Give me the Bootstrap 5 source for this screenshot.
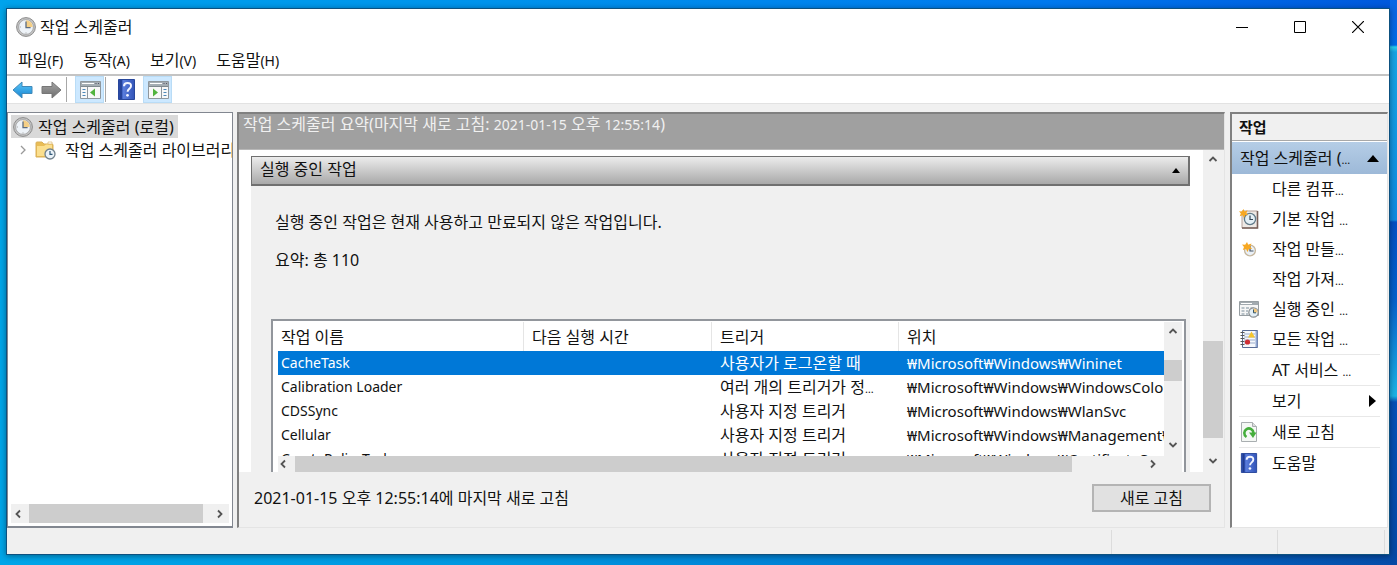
<!DOCTYPE html>
<html lang="ko">
<head>
<meta charset="utf-8">
<meta name="viewport" content="width=device-width, initial-scale=1">
<title>작업 스케줄러</title>
<link href="https://cdn.jsdelivr.net/npm/bootstrap@5.3.0/dist/css/bootstrap.min.css" rel="stylesheet">
<style>
:root{--face:#f0f0f0;--thumb:#cdcdcd;--edge:#828790}
body{font-family:"Noto Sans","Noto Sans CJK KR",sans-serif;font-size:16px;line-height:24px;color:#111;
 background:linear-gradient(180deg,#0a66e4 0 20px,#006be6 45px,#2ad0ee 47px,#18a4e4 52px,#0e8ae0 220px,#0450c4 222px,#0560cc 300px,#1cb4e6 396px,#0650b8 402px,#0648a4) right/7px 100% no-repeat,
 linear-gradient(90deg,#00a3ec,#0093ec 35%,#0079ee 75%,#0058dc) top/100% 10px no-repeat,
 linear-gradient(90deg,#00a5e8,#0097e0 35%,#0070cc 75%,#064ca8)}
button{font:inherit;color:inherit}
a{color:inherit;text-decoration:none}
svg{display:block;flex:none}
.desk{height:100vh;min-height:400px;padding:8px 7px 10px 6px}
.win{border:1px solid #0d5180;background:var(--face);box-shadow:0 1px 6px #0006}
.titlebar{height:36px;padding:0 2px 0 9px}
.titlebar button{width:58px;height:36px;border:0;background:none}
.titlebar button svg{margin:auto}
.menus{height:31px;gap:20px;padding:4px 12px 0 11px;border-bottom:2px solid #c4c4c4;line-height:22px}
.menus small{font-size:14px}
.tools{height:28px;padding-left:5px;border-bottom:1px solid #e2e2e2}
.tools button{border:0;background:none;padding:0;height:27px}
.tools .held{background:#cce8ff;border:1px solid #b9dcf6;width:29px;padding-left:4px}
.rule{width:1px;height:25px;background:#a8a8a8}
.rule.near{margin:0 4px 0 1px}
.panes{padding:8px 1px 0 0}
.tree{width:226px;border:1px solid var(--edge);border-bottom-width:2px;background:#fff}
.node{height:23px;line-height:22px;white-space:nowrap}
.node.on{background:#d9d9d9;margin:2px 0 0 3px;padding:0 4px 0 2px;gap:5px}
.node.kid{padding-left:12px;gap:9px}
.treebar{height:19px;background:var(--face);margin:auto 3px 3px}
.mid{margin:0 5px 0 4px;border:solid #808080;border-width:2px 0 0 2px;border-right:1px solid #e4e4e4;border-bottom:1px solid #e4e4e4}
.banner{height:36px;background:#a0a0a0;color:#f0f0f0;padding-left:4px;line-height:20px;border-bottom:1px solid #b8b8b8;white-space:nowrap;overflow:hidden}
.banner time{font-size:14px}
.sheet{background:#fff;padding:6px 13px 0 12px;overflow:hidden}
.ghead{height:30px;border:2px solid #707070;border-width:1px 2px 2px 1px;background:linear-gradient(#ececec,#a9a9a9);padding:0 8px;line-height:24px}
.gbody{background:var(--face);padding:24px 4px 0 20px;overflow:hidden}
.gbody p{margin:0 0 14px 4px}
.list{border:2px solid #92969c;border-bottom:0;background:#fff;margin-top:33px;padding:1px 2px 0 5px;overflow:hidden}
.rows{overflow:hidden}
.rows table{width:100%;table-layout:fixed;border-collapse:separate;border-spacing:0}
.rows th,.rows td{padding:0 0 0 3px;font-weight:400;white-space:nowrap;overflow:hidden;height:24px;line-height:22px;vertical-align:middle}
.rows th{height:29px;border-left:1px solid #e5e5e5;padding-left:8px}
.rows th:first-child{border:0;padding-left:3px}
.rows td+td{padding-left:9px}
.rows td:first-child{font-size:14px}
.rows td:last-child{font-size:15px}
.rows .sel td{background:#0078d7;color:#fff}
.vbar{width:18px;background:var(--face);padding:4px 0 6px}
.vbar.wide{width:20px;margin-right:1px}
.vbar .thumb{flex:none}
.hbar{height:16px;background:var(--face)}
.thumb{background:var(--thumb)}
.gap20{margin-top:18px}
.foot{height:55px;padding:0 13px 3px 15px}
.foot button{width:119px;height:28px;border:2px solid #b4b4b4;background:#e1e1e1;padding:0;line-height:22px}
.acts{width:158px;background:#fff;border:solid #808080;border-width:2px 0 0 2px;border-right:1px solid #e4e4e4;border-bottom:1px solid #e4e4e4}
.acts h2{font-size:15px;line-height:26px;font-weight:700;margin:0;padding-left:7px;background:var(--face);border-bottom:1px solid #a8a8a8}
.acts .scope{height:32px;margin-top:1px;padding:0 8px;background:linear-gradient(#b5cde6,#9db9d8);border:0;width:100%}
.acts li{margin:0 7px}
.acts li a{height:30px}
.acts li.cut{border-top:1px solid #e8e8e8}
.acts .ico{width:20px;margin-right:13px}
.dots{font-size:11px;line-height:1}
.status{height:26px}
.status span{border-right:1px solid #dcdcdc;margin-top:2px}
</style>
</head>
<body>
<svg width="0" height="0" class="position-absolute" aria-hidden="true">
 <defs>
 <linearGradient id="gb" x2="0" y2="1"><stop stop-color="#5cc8fa"/><stop offset="1" stop-color="#1583d0"/></linearGradient>
 <linearGradient id="gg" x2="0" y2="1"><stop stop-color="#a4a4a4"/><stop offset="1" stop-color="#6e6e6e"/></linearGradient>
 <linearGradient id="gh" x2="1" y2="0"><stop stop-color="#2746a0"/><stop offset=".2" stop-color="#2f52b4"/><stop offset=".3" stop-color="#5a7ddc"/><stop offset="1" stop-color="#3254b8"/></linearGradient>
 <symbol id="clock" viewBox="0 0 20 20"><circle cx="10" cy="10" r="9.4" fill="#c4c4c4" stroke="#8c8c8c"/><circle cx="10" cy="10" r="7.4" fill="#eef3f8" stroke="#9c9c9c" stroke-width=".8"/><path d="M10 10V3.2A6.8 6.8 0 0 1 16.8 10z" fill="#f4cf86"/><path d="M10 4.5V10.6H14.6" fill="none" stroke="#5c6c80" stroke-width="1.3"/><path d="M10 15.5v1M3.8 10h1" stroke="#999"/></symbol>
 <symbol id="folder" viewBox="0 0 21 20"><path d="M1 3q0-1 1-1h5l2 2h8q1 0 1 1v12H1z" fill="#e9bd55" stroke="#d9b05a"/><path d="M2 6h7l2-1.500h6V16H2z" fill="#fbdf8e"/><path d="M13 2h4v2h-4z" fill="#fff" stroke="#d9b05a" stroke-width=".6"/><circle cx="15" cy="14" r="5" fill="#eaf2f8" stroke="#71818d" stroke-width="1.300"/><path d="M15 11v3.300h2.500" fill="none" stroke="#2f5878" stroke-width="1.200"/></symbol>
 <symbol id="help" viewBox="0 0 17 21"><path d="M.5.5h16v20H.5z" fill="url(#gh)" stroke="#28479c"/><path d="M3 1v19" stroke="#1d3684"/><path d="M6 7.200Q6 4 9.600 4t3.400 3.100c0 2.600-3.400 2.900-3.400 5.700" fill="none" stroke="#f2f5ff" stroke-width="2"/><circle cx="9.500" cy="16.300" r="1.400" fill="#f2f5ff"/></symbol>
 <symbol id="pane" viewBox="0 0 21 18"><path d="M.5.5h20v17H.5z" fill="#f8f8f8" stroke="#8f979d"/><path d="M1 1h19v4H1z" fill="#a4adb3"/><path d="M2 2.500h12" stroke="#fff"/><path d="M15.500 2.500h1m1.500 0h1" stroke="#556"/><path d="M1 5.500h19" stroke="#808a90"/><path d="M7.500 6v11" stroke="#8f979d"/><path d="M2.500 8.500h3m-3 3h3m-3 3h3" stroke="#4e88b8"/><path d="M15 7.500v8L10 11.500z" fill="#51b33e"/></symbol>
 <symbol id="pane2" viewBox="0 0 21 18"><path d="M.5.5h20v17H.5z" fill="#f8f8f8" stroke="#8f979d"/><path d="M1 1h19v4H1z" fill="#a4adb3"/><path d="M2 2.500h12" stroke="#fff"/><path d="M15.500 2.500h1m1.500 0h1" stroke="#556"/><path d="M1 5.500h19" stroke="#808a90"/><path d="M13.500 6v11" stroke="#8f979d"/><path d="M15.500 8.500h3m-3 3h3m-3 3h3" stroke="#4e88b8"/><path d="M5 7.500v8l5-4z" fill="#51b33e"/></symbol>
 <symbol id="arr" viewBox="0 0 21 18"><path d="M1 9 10 1v4.500h10v7H10V17z"/></symbol>
 <symbol id="star" viewBox="0 0 10 10"><path d="m5 0 1.200 2.700L9.500 1.500 8.200 4.500 10 7l-3-.2L5.500 10 4 7 .8 8 2 5 0 2.500l3.200.2z" fill="#f7a823"/></symbol>
 <symbol id="basic" viewBox="0 0 20 20"><path d="M3 2h15.500v17H3z" fill="#eee9e5" stroke="#b4a19a"/><path d="M18.500 2v17H3" fill="none" stroke="#775f58" stroke-width="1.600"/><circle cx="11" cy="10" r="5.600" fill="#e4eff5" stroke="#607a88" stroke-width="1.300"/><path d="M11 6.500v4h3" fill="none" stroke="#345" stroke-width="1.200"/><use href="#star" width="9" height="9"/></symbol>
 <symbol id="make" viewBox="0 0 20 20"><circle cx="11" cy="11.500" r="5.400" fill="#eaf0f6" stroke="#c4b59c" stroke-width="1.300"/><path d="M11 7v5h3.500" fill="none" stroke="#456" stroke-width="1.200"/><use href="#star" x="3" y="3" width="10" height="10"/></symbol>
 <symbol id="run" viewBox="0 0 20 20"><path d="M.5 2.500h19v14H.5z" fill="#f6f6f6" stroke="#979ea2"/><path d="M1 3h18v3H1z" fill="#a2aaaf"/><path d="M2 4.500h11" stroke="#fff"/><path d="M2.500 9h3m1.500 0h3m1.500 0h3M2.500 12h3m1.500 0h2M2.500 15h3m1.500 0h2" stroke="#7b8e9b"/><circle cx="14.500" cy="13.500" r="4.700" fill="#e2eef6" stroke="#8a8f92" stroke-width="1.200"/><path d="M14.500 13.500V9.500a4 4 0 0 1 4 4z" fill="#f1c67c"/><path d="M14.500 10.500v3.300H17" fill="none" stroke="#356"/></symbol>
 <symbol id="book" viewBox="0 0 20 20"><path d="M3.500 1.500h15v17h-15z" fill="#f6f8fc" stroke="#5a6d96"/><path d="M17.500 2v16" stroke="#8fa5d0" stroke-width="2"/><path d="M5 5h11M5 8h11M5 11h11M5 14h11" stroke="#9aadcc"/><path d="M1.500 3.500h4m-4 3h4m-4 3h4m-4 3h4m-4 3h4" stroke="#555"/><path d="m12.500 2.500 3.500 6H9z" fill="#f5c52c"/><circle cx="8.500" cy="13" r="2.600" fill="#cf2f35"/></symbol>
 <symbol id="fresh" viewBox="0 0 20 20"><path d="M2.500.5h11l4 4v15h-15z" fill="#f5f8f5" stroke="#a9aeb0"/><path d="M13.500.5v4h4" fill="#ddd" stroke="#a9aeb0"/><path d="M7.500 15a4.600 4.600 0 1 1 7-4" fill="none" stroke="#45ae3c" stroke-width="2.600"/><path d="M10 10.500h7.500L14 16z" fill="#45ae3c"/></symbol>
 <symbol id="up" viewBox="0 0 10 10"><path d="M1.500 7 5 3.500 8.500 7" fill="none" stroke="#555" stroke-width="1.800"/></symbol>
 </defs>
</svg>
<div class="desk d-flex flex-column">
<main class="win d-flex flex-column flex-grow-1 overflow-hidden">
 <header class="titlebar bg-white d-flex align-items-center flex-shrink-0">
  <svg width="20" height="20" class="me-1"><use href="#clock"/></svg>
  <span class="me-auto">작업 스케줄러</span>
  <button aria-label="최소화"><svg width="12" height="12"><path d="M0 6.500h12" stroke="#000"/></svg></button>
  <button aria-label="최대화"><svg width="12" height="12"><path d="M.5.5h11v11H.5z" fill="none" stroke="#000"/></svg></button>
  <button aria-label="닫기"><svg width="12" height="12"><path d="m0 0 12 12M12 0 0 12" stroke="#000" stroke-width="1.200"/></svg></button>
 </header>
 <nav class="menus bg-white d-flex flex-shrink-0"><a href="#">파일<small>(F)</small></a><a href="#">동작<small>(A)</small></a><a href="#">보기<small>(V)</small></a><a href="#">도움말<small>(H)</small></a></nav>
 <div class="tools bg-white d-flex align-items-center flex-shrink-0" role="toolbar">
  <button aria-label="뒤로"><svg width="21" height="18" fill="url(#gb)" stroke="#4189b8"><use href="#arr"/></svg></button>
  <button aria-label="앞으로" class="ms-2"><svg width="21" height="18" fill="url(#gg)" stroke="#777"><g transform="matrix(-1 0 0 1 21 0)"><use href="#arr"/></g></svg></button>
  <i class="rule ms-1 me-2"></i>
  <button class="held" aria-label="콘솔 트리"><svg width="21" height="18"><use href="#pane"/></svg></button>
  <i class="rule near"></i>
  <button class="ms-1 ps-1 me-2" aria-label="도움말"><svg width="17" height="21"><use href="#help"/></svg></button>
  <button class="held" aria-label="작업 창"><svg width="21" height="18"><use href="#pane2"/></svg></button>
 </div>
 <div class="panes d-flex flex-grow-1 overflow-hidden">
  <aside class="tree d-flex flex-column flex-shrink-0 overflow-hidden">
   <a href="#" class="node on d-flex align-items-center align-self-start"><svg width="20" height="20"><use href="#clock"/></svg>작업 스케줄러 (로컬)</a>
   <a href="#" class="node kid d-flex align-items-center"><svg width="6" height="10"><path d="m1 1 4 4-4 4" fill="none" stroke="#999" stroke-width="1.300"/></svg><svg width="21" height="20"><use href="#folder"/></svg><span>작업 스케줄러 라이브러리</span></a>
   <div class="treebar d-flex align-items-center">
    <svg width="18" height="10" viewBox="0 0 18 10"><use href="#up" width="10" height="10" transform="translate(2 10) rotate(-90)"/></svg>
    <div class="thumb h-100 flex-grow-1"></div>
    <svg width="26" height="10" viewBox="0 0 26 10"><use href="#up" width="10" height="10" transform="translate(22 0) rotate(90)"/></svg>
   </div>
  </aside>
  <section class="mid d-flex flex-column flex-grow-1 overflow-hidden">
   <div class="banner flex-shrink-0">작업 스케줄러 요약(마지막 새로 고침: <time>2021-01-15</time> 오후 <time>12:55:14</time>)</div>
   <div class="d-flex flex-grow-1 overflow-hidden">
    <div class="sheet d-flex flex-column flex-grow-1">
     <div class="ghead d-flex flex-shrink-0"><span class="me-auto">실행 중인 작업</span><svg width="8" height="5" class="align-self-center"><path d="m0 5 4-5 4 5z"/></svg></div>
     <div class="gbody d-flex flex-column flex-grow-1">
      <p>실행 중인 작업은 현재 사용하고 만료되지 않은 작업입니다.</p>
      <p>요약: 총 110</p>
      <div class="list d-flex flex-column flex-grow-1">
       <div class="d-flex flex-grow-1 overflow-hidden">
        <div class="rows flex-grow-1">
         <table>
          <colgroup><col style="width:245px"><col style="width:188px"><col style="width:187px"><col></colgroup>
          <thead><tr><th>작업 이름</th><th>다음 실행 시간</th><th>트리거</th><th>위치</th></tr></thead>
          <tbody>
           <tr class="sel"><td>CacheTask</td><td></td><td>사용자가 로그온할 때</td><td>₩Microsoft₩Windows₩Wininet</td></tr>
           <tr><td>Calibration Loader</td><td></td><td>여러 개의 트리거가 정<span class="dots">…</span></td><td>₩Microsoft₩Windows₩WindowsColorSystem</td></tr>
           <tr><td>CDSSync</td><td></td><td>사용자 지정 트리거</td><td>₩Microsoft₩Windows₩WlanSvc</td></tr>
           <tr><td>Cellular</td><td></td><td>사용자 지정 트리거</td><td>₩Microsoft₩Windows₩Management₩Provisioning</td></tr>
           <tr><td>CreatePolicyTask</td><td></td><td>사용자 지정 트리거</td><td>₩Microsoft₩Windows₩CertificateServicesClient</td></tr>
          </tbody>
         </table>
        </div>
        <div class="vbar d-flex flex-column align-items-center flex-shrink-0">
         <svg width="10" height="10"><use href="#up"/></svg>
         <div class="thumb w-100 mt-4" style="height:21px"></div>
         <svg width="10" height="10" class="mt-auto"><g transform="rotate(180 5 5)"><use href="#up"/></g></svg>
        </div>
       </div>
       <div class="hbar d-flex align-items-center flex-shrink-0">
        <svg width="17" height="10" viewBox="0 0 17 10"><use href="#up" width="10" height="10" transform="translate(0 10) rotate(-90)"/></svg>
        <div class="thumb h-100" style="width:86%"></div>
        <svg width="10" height="10" class="ms-auto me-4"><g transform="rotate(90 5 5)"><use href="#up"/></g></svg>
       </div>
      </div>
     </div>
    </div>
    <div class="vbar wide d-flex flex-column align-items-center flex-shrink-0">
     <svg width="10" height="10"><use href="#up"/></svg>
     <div class="thumb w-100 mt-auto" style="height:31%"></div>
     <svg width="10" height="10" class="gap20"><g transform="rotate(180 5 5)"><use href="#up"/></g></svg>
    </div>
   </div>
   <div class="foot d-flex align-items-center justify-content-between flex-shrink-0"><span><time>2021-01-15</time> 오후 <time>12:55:14</time>에 마지막 새로 고침</span><button>새로 고침</button></div>
  </section>
  <aside class="acts flex-shrink-0 overflow-hidden">
   <h2>작업</h2>
   <button class="scope d-flex align-items-center justify-content-between"><span>작업 스케줄러 (<span class="dots">…</span></span><svg width="12" height="7"><path d="m0 7 6-7 6 7z"/></svg></button>
   <ul class="list-unstyled mb-0">
    <li><a href="#" class="d-flex align-items-center"><span class="ico"></span><span>다른 컴퓨<span class="dots">…</span></span></a></li>
    <li><a href="#" class="d-flex align-items-center"><svg class="ico" height="20"><use href="#basic"/></svg><span>기본 작업 <span class="dots">…</span></span></a></li>
    <li><a href="#" class="d-flex align-items-center"><svg class="ico" height="20"><use href="#make"/></svg><span>작업 만들<span class="dots">…</span></span></a></li>
    <li><a href="#" class="d-flex align-items-center"><span class="ico"></span><span>작업 가져<span class="dots">…</span></span></a></li>
    <li><a href="#" class="d-flex align-items-center"><svg class="ico" height="20"><use href="#run"/></svg><span>실행 중인 <span class="dots">…</span></span></a></li>
    <li><a href="#" class="d-flex align-items-center"><svg class="ico" height="20"><use href="#book"/></svg><span>모든 작업 <span class="dots">…</span></span></a></li>
    <li class="cut"><a href="#" class="d-flex align-items-center"><span class="ico"></span><span>AT 서비스 <span class="dots">…</span></span></a></li>
    <li class="cut"><a href="#" class="d-flex align-items-center"><span class="ico"></span><span class="me-auto">보기</span><svg width="7" height="12" class="me-1"><path d="m0 0 7 6-7 6z"/></svg></a></li>
    <li class="cut"><a href="#" class="d-flex align-items-center"><svg class="ico" height="20"><use href="#fresh"/></svg><span>새로 고침</span></a></li>
    <li class="cut"><a href="#" class="d-flex align-items-center"><svg class="ico" height="20"><use href="#help"/></svg><span>도움말</span></a></li>
   </ul>
  </aside>
 </div>
 <footer class="status d-flex flex-shrink-0"><span class="flex-grow-1"></span><span style="width:166px"></span><span style="width:107px" class="me-1"></span></footer>
</main>
</div>
<script src="https://cdn.jsdelivr.net/npm/bootstrap@5.3.0/dist/js/bootstrap.bundle.min.js"></script>
</body>
</html>
